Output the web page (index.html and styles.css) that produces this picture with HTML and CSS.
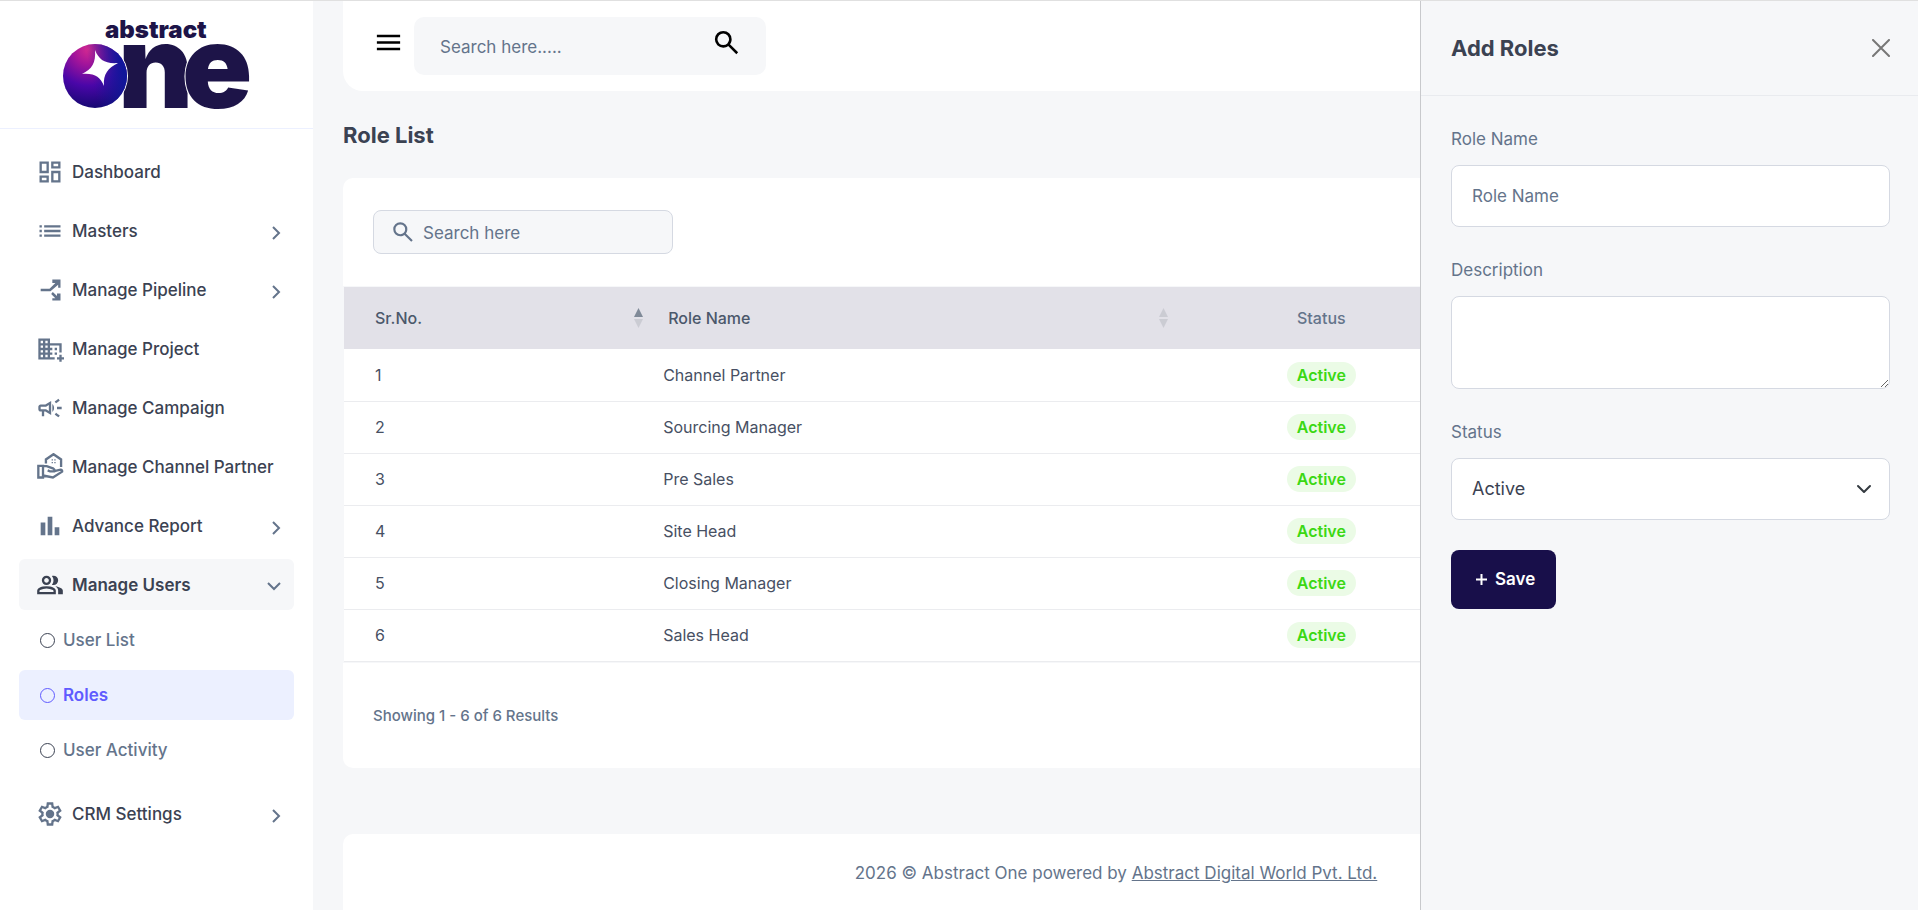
FILE: index.html
```html
<!DOCTYPE html>
<html lang="en">
<head>
    <meta charset="UTF-8">
    <meta name="viewport" content="width=device-width, initial-scale=1.0">
    <title>Role List</title>
    <link rel="stylesheet" href="styles.css">
</head>
<body>

    <aside class="sidebar">
        <a href="#" class="logo" aria-label="abstract one">
            <svg width="190" height="115" viewBox="0 0 190 115">
                <defs>
                    <radialGradient id="ball" cx="0.4" cy="0.08" r="0.95">
                        <stop offset="0" stop-color="#d62a90"/>
                        <stop offset="0.25" stop-color="#a3149a"/>
                        <stop offset="0.6" stop-color="#4a06a8"/>
                        <stop offset="1" stop-color="#12086e"/>
                    </radialGradient>
                    <linearGradient id="shade" x1="0.3" y1="0.5" x2="1" y2="0.35">
                        <stop offset="0.2" stop-color="#1a1a9c" stop-opacity="0"/>
                        <stop offset="0.9" stop-color="#10169a"/>
                    </linearGradient>
                </defs>
                <text class="logo-small" x="43" y="26">abstract</text>
                <text class="logo-big" x="56" y="96">n</text>
                <text class="logo-big" x="120" y="96">e</text>
                <circle cx="33" cy="64" r="33" fill="#fff"/>
                <circle cx="33" cy="64" r="32" fill="url(#ball)"/>
                <circle cx="33" cy="64" r="32" fill="url(#shade)"/>
                <path d="M33 38c4 10 10 14 23 13-10 5-15 11-14 23-4-9-9-13-22-12 10-5 14-11 13-24z" fill="#fff"/>
            </svg>
        </a>

        <nav class="menu">
            <a href="#" class="menu-item">
                <svg class="icon" viewBox="0 0 24 24"><path d="M19 5v2h-4V5h4M9 5v6H5V5h4m10 8v6h-4v-6h4M9 17v2H5v-2h4M21 3h-8v6h8V3zM11 3H3v10h8V3zm10 8h-8v10h8V11zm-10 4H3v6h8v-6z"/></svg>
                <span>Dashboard</span>
            </a>
            <a href="#" class="menu-item">
                <svg class="icon" viewBox="0 0 24 24"><path d="M3 13h2v-2H3v2zm0 4h2v-2H3v2zm0-8h2V7H3v2zm4 4h14v-2H7v2zm0 4h14v-2H7v2zM7 7v2h14V7H7z"/></svg>
                <span>Masters</span>
                <svg class="arrow" viewBox="0 0 14 14"><path d="M6 1l6 6-6 6"/></svg>
            </a>
            <a href="#" class="menu-item">
                <svg class="icon" viewBox="0 0 24 24"><path d="M4 11h7.600l5-5H14V3h7v7h-2V7.400L12.400 13H4zM14.400 13.800l3.600 3.400V15h3v6h-7v-2h2.600l-3.600-3.600z"/></svg>
                <span>Manage Pipeline</span>
                <svg class="arrow" viewBox="0 0 14 14"><path d="M6 1l6 6-6 6"/></svg>
            </a>
            <a href="#" class="menu-item">
                <svg class="icon" viewBox="0 0 24 24"><path d="M12 7V3H2v18h14v-2h-4v-2h2v-2h-2v-2h2v-2h-2V9h8v6h2V7H12zM6 19H4v-2h2v2zm0-4H4v-2h2v2zm0-4H4V9h2v2zm0-4H4V5h2v2zm4 12H8v-2h2v2zm0-4H8v-2h2v2zm0-4H8V9h2v2zm0-4H8V5h2v2zm14 12v2h-2v2h-2v-2h-2v-2h2v-2h2v2h2zm-6-8h-2v2h2v-2zm0 4h-2v2h2v-2z"/></svg>
                <span>Manage Project</span>
            </a>
            <a href="#" class="menu-item">
                <svg class="icon" viewBox="0 0 24 24"><path d="M18 11v2h4v-2h-4zm-2 6.610c.96.71 2.210 1.650 3.200 2.390.4-.53.8-1.070 1.200-1.600-.99-.74-2.240-1.680-3.200-2.400-.4.54-.8 1.080-1.200 1.610zM20.400 5.600c-.4-.53-.8-1.070-1.200-1.600-.99.74-2.240 1.680-3.200 2.400.4.53.8 1.070 1.200 1.600.96-.72 2.210-1.650 3.200-2.400zM4 9c-1.100 0-2 .9-2 2v2c0 1.100.9 2 2 2h1v4h2v-4h1l5 3V6L8 9H4zm5.030 1.710L11 9.530v4.940l-1.970-1.180-.48-.29H4v-2h4.550l.48-.29zM15.500 12c0-1.330-.58-2.530-1.500-3.350v6.690c.92-.81 1.500-2.010 1.500-3.340z"/></svg>
                <span>Manage Campaign</span>
            </a>
            <a href="#" class="menu-item">
                <svg class="icon icon-line" viewBox="0 0 24 24"><path d="M2 11h4v10H2zM6 11.200h3.200l5.800 2.200q1.300.8.800 2.300H12l-2-.8M15.700 15.500l5.300-1.300q1.600.2 1.400 1.800L14.500 21 6 19.300M8.500 9V5.500L15 1l6.500 4.500V12"/><path class="dots" d="M13.400 5.400h1.100v1.100h-1.100zM15.700 5.400h1.100v1.100h-1.100zM13.400 7.700h1.100v1.100h-1.100zM15.700 7.700h1.100v1.100h-1.100z"/></svg>
                <span>Manage Channel Partner</span>
            </a>
            <a href="#" class="menu-item">
                <svg class="icon" viewBox="0 0 24 24"><path d="M4 9h4v11H4zm12 4h4v7h-4zm-6-9h4v16h-4z"/></svg>
                <span>Advance Report</span>
                <svg class="arrow" viewBox="0 0 14 14"><path d="M6 1l6 6-6 6"/></svg>
            </a>
            <a href="#" class="menu-item open">
                <svg class="icon" viewBox="0 -960 960 960"><path d="M40-160v-112q0-34 17.500-62.500T104-378q62-31 126-46.500T360-440q66 0 130 15.500T616-378q29 15 46.500 43.500T680-272v112H40Zm720 0v-120q0-44-24.500-84.500T666-434q51 6 96 20.500t84 35.500q36 20 55 44.500t19 53.500v120H760ZM360-480q-66 0-113-47t-47-113q0-66 47-113t113-47q66 0 113 47t47 113q0 66-47 113t-113 47Zm400-160q0 66-47 113t-113 47q-11 0-28-2.500t-28-5.500q27-32 41.500-71t14.500-81q0-42-14.500-81T544-792q14-5 28-6.500t28-1.500q66 0 113 47t47 113ZM120-240h480v-32q0-11-5.500-20T580-306q-54-27-109-40.500T360-360q-56 0-111 13.500T140-306q-9 5-14.500 14t-5.500 20v32Zm240-320q33 0 56.500-23.500T440-640q0-33-23.500-56.500T360-720q-33 0-56.500 23.500T280-640q0 33 23.500 56.500T360-560Z"/></svg>
                <span>Manage Users</span>
                <svg class="arrow" viewBox="0 0 14 14"><path d="M1 3l6 6 6-6"/></svg>
            </a>
            <div class="submenu">
                <a href="#" class="sub-item">User List</a>
                <a href="#" class="sub-item active">Roles</a>
                <a href="#" class="sub-item">User Activity</a>
            </div>
            <a href="#" class="menu-item">
                <svg class="icon" viewBox="0 -960 960 960"><path d="m370-80-16-128q-13-5-24.500-12T307-235l-119 50L78-375l103-78q-1-7-1-13.500v-27q0-6.500 1-13.500L78-585l110-190 119 50q11-8 23-15t24-12l16-128h220l16 128q13 5 24.500 12t22.500 15l119-50 110 190-103 78q1 7 1 13.500v27q0 6.500-2 13.500l103 78-110 190-118-50q-11 8-23 15t-24 12L590-80H370Zm70-80h79l14-106q31-8 57.500-23.500T639-327l99 41 39-68-86-65q5-14 7-29.500t2-31.500q0-16-2-31.500t-7-29.500l86-65-39-68-99 42q-22-23-48.500-38.500T533-694l-13-106h-79l-14 106q-31 8-57.500 23.500T321-633l-99-41-39 68 86 64q-5 15-7 30t-2 32q0 16 2 31t7 30l-86 65 39 68 99-42q22 23 48.500 38.500T427-266l13 106Z"/><circle cx="480" cy="-480" r="145"/></svg>
                <span>CRM Settings</span>
                <svg class="arrow" viewBox="0 0 14 14"><path d="M6 1l6 6-6 6"/></svg>
            </a>
        </nav>
    </aside>

    <main class="main">
        <header class="topbar">
            <button type="button" class="icon-btn" aria-label="Toggle menu">
                <svg width="31" height="31" viewBox="0 0 24 24"><path d="M3 18h18v-2H3v2zm0-5h18v-2H3v2zm0-7v2h18V6H3z"/></svg>
            </button>
            <form class="top-search">
                <input type="text" placeholder="Search here....." aria-label="Search">
                <button type="button" class="icon-btn" aria-label="Search">
                    <svg width="31" height="31" viewBox="0 -960 960 960"><path d="M784-120 532-372q-30 24-69 38t-83 14q-109 0-184.500-75.500T120-580q0-109 75.500-184.500T380-840q109 0 184.500 75.500T640-580q0 44-14 83t-38 69l252 252-56 56ZM380-400q75 0 127.500-52.500T560-580q0-75-52.500-127.500T380-760q-75 0-127.500 52.500T200-580q0 75 52.500 127.500T380-400Z"/></svg>
                </button>
            </form>
        </header>

        <h1 class="page-title">Role List</h1>

        <section class="card">
            <div class="card-head">
                <label class="table-search">
                    <svg width="26" height="26" viewBox="0 -960 960 960"><path d="M784-120 532-372q-30 24-69 38t-83 14q-109 0-184.500-75.500T120-580q0-109 75.500-184.500T380-840q109 0 184.500 75.500T640-580q0 44-14 83t-38 69l252 252-56 56ZM380-400q75 0 127.500-52.500T560-580q0-75-52.500-127.500T380-760q-75 0-127.500 52.500T200-580q0 75 52.500 127.500T380-400Z"/></svg>
                    <input type="text" placeholder="Search here" aria-label="Search roles">
                </label>
            </div>
            <div class="table-wrap">
                <table class="role-table">
                    <thead>
                        <tr>
                            <th class="col-no"><div class="sort asc">Sr.No. <svg width="9" height="20" viewBox="0 0 9 20"><path class="up" d="M4.500 0L9 9H0z"/><path class="down" d="M0 11h9l-4.500 9z"/></svg></div></th>
                            <th class="col-name"><div class="sort">Role Name <svg width="9" height="20" viewBox="0 0 9 20"><path class="up" d="M4.500 0L9 9H0z"/><path class="down" d="M0 11h9l-4.500 9z"/></svg></div></th>
                            <th class="col-status">Status</th>
                            <th></th>
                        </tr>
                    </thead>
                    <tbody>
                        <tr><td>1</td><td>Channel Partner</td><td><span class="badge">Active</span></td><td></td></tr>
                        <tr><td>2</td><td>Sourcing Manager</td><td><span class="badge">Active</span></td><td></td></tr>
                        <tr><td>3</td><td>Pre Sales</td><td><span class="badge">Active</span></td><td></td></tr>
                        <tr><td>4</td><td>Site Head</td><td><span class="badge">Active</span></td><td></td></tr>
                        <tr><td>5</td><td>Closing Manager</td><td><span class="badge">Active</span></td><td></td></tr>
                        <tr><td>6</td><td>Sales Head</td><td><span class="badge">Active</span></td><td></td></tr>
                    </tbody>
                </table>
            </div>
            <p class="results">Showing 1 - 6 of 6 Results</p>
        </section>

        <footer class="footer">
            <p>2026 © Abstract One powered by <a href="#">Abstract Digital World Pvt. Ltd.</a></p>
        </footer>
    </main>

    <!-- Add role side panel -->
    <aside class="panel">
        <div class="panel-head">
            <h2>Add Roles</h2>
            <button type="button" class="icon-btn" aria-label="Close">
                <svg class="close" width="18" height="18" viewBox="0 0 18 18"><path d="M1 1l16 16M17 1L1 17"/></svg>
            </button>
        </div>
        <form class="panel-body">
            <div class="field">
                <label for="role-name">Role Name</label>
                <input type="text" id="role-name" placeholder="Role Name">
            </div>
            <div class="field">
                <label for="description">Description</label>
                <textarea id="description"></textarea>
            </div>
            <div class="field">
                <label for="status">Status</label>
                <div class="select-wrap">
                    <select id="status">
                        <option>Active</option>
                        <option>Inactive</option>
                    </select>
                    <svg width="16" height="16" viewBox="0 0 16 16"><path d="M2 5l6 6 6-6"/></svg>
                </div>
            </div>
            <button type="button" class="save">
                <svg width="13" height="13" viewBox="0 0 13 13"><path d="M6.500 1v11M1 6.500h11"/></svg>
                Save
            </button>
        </form>
    </aside>

</body>
</html>
```
FILE: styles.css
```css
* {
    box-sizing: border-box;
}

body {
    margin: 0;
    height: 100vh;
    display: flex;
    overflow: hidden;
    border-top: 1px solid #e0e0e0;
    background-color: #f6f7f9;
    color: #3b4252;
    font-family: Inter, "Liberation Sans", sans-serif;
    font-size: 17px;
    line-height: 26px;
}

h1, h2, p {
    margin: 0;
}

a {
    color: inherit;
    text-decoration: none;
}

input, textarea, select, button {
    font: inherit;
    color: inherit;
}

input::placeholder {
    color: #64748b;
    opacity: 1;
}

.icon-btn {
    display: flex;
    padding: 0;
    border: none;
    background: none;
    cursor: pointer;
}

.icon-btn svg {
    fill: #000;
}

/* sidebar */
.sidebar {
    width: 313px;
    flex-shrink: 0;
    background-color: #fff;
}

.logo {
    display: flex;
    justify-content: center;
    height: 128px;
    padding-top: 11px;
    border-bottom: 1px solid #ecf0ff;
}

.logo-small, .logo-big {
    font-family: Inter, sans-serif;
    font-weight: 900;
    fill: #1d1448;
}

.logo-small {
    font-size: 24px;
}

.logo-big {
    font-size: 116px;
    stroke: #fff;
    stroke-width: 2px;
    paint-order: stroke;
}

.menu {
    display: flex;
    flex-direction: column;
    gap: 8px;
    padding: 17px 19px;
}

.menu-item {
    display: flex;
    align-items: center;
    gap: 8px;
    height: 51px;
    padding: 0 13px 0 17px;
    border-radius: 6px;
    font-weight: 500;
    white-space: nowrap;
}

.icon {
    width: 28px;
    height: 28px;
    flex-shrink: 0;
    fill: #64748b;
}

.icon-line {
    fill: none;
    stroke: #64748b;
    stroke-width: 2;
}

.dots {
    fill: #64748b;
    stroke: none;
}

.arrow {
    width: 14px;
    height: 14px;
    margin: 4px 0 0 auto;
    fill: none;
    stroke: #64748b;
    stroke-width: 2;
}

.menu-item.open {
    background-color: #f6f7f9;
    font-weight: 600;
}

.menu-item.open .icon {
    fill: #3b4252;
}

.submenu {
    display: flex;
    flex-direction: column;
    gap: 5px;
    margin: -3px 0 5px;
}

.sub-item {
    display: flex;
    align-items: center;
    gap: 8px;
    height: 50px;
    padding-left: 21px;
    border-radius: 6px;
    color: #64748b;
    font-weight: 500;
}

.sub-item::before {
    content: "";
    width: 13px;
    height: 13px;
    border: 1px solid #3b4252;
    border-radius: 50%;
}

.sub-item.active {
    background-color: #ecf0ff;
    color: #605bff;
    font-weight: 600;
}

.sub-item.active::before {
    border-color: #605bff;
}

/* main */
.main {
    flex: 1;
    display: flex;
    flex-direction: column;
    padding: 0 29px 0 30px;
}

.topbar {
    display: flex;
    gap: 10px;
    padding: 16px 30px;
    border-radius: 0 0 20px 20px;
    background-color: #fff;
}

.topbar .icon-btn {
    align-items: center;
    height: 50px;
}

.top-search {
    display: flex;
    width: 352px;
    height: 58px;
    padding: 0 24px 0 26px;
    border-radius: 10px;
    background-color: #f6f7f9;
}

.top-search input, .table-search input {
    flex: 1;
    min-width: 0;
    padding: 1px 0 0;
    border: none;
    outline: none;
    background: none;
}

.page-title {
    margin: 30px 0 28px;
    font-size: 22px;
    line-height: 29px;
    font-weight: 700;
}

.card {
    border-radius: 10px;
    background-color: #fff;
}

.card-head {
    padding: 32px 30px;
}

.table-search {
    display: flex;
    align-items: center;
    gap: 7px;
    width: 300px;
    height: 44px;
    padding: 0 16px;
    border: 1px solid #d5d9e2;
    border-radius: 8px;
    background-color: #f6f7f9;
}

.table-search svg {
    fill: #64748b;
}

.table-wrap {
    border: 1px solid #f6f7f9;
}

.role-table {
    width: 100%;
    table-layout: fixed;
    border-collapse: collapse;
    font-size: 16px;
    line-height: 20px;
    color: #475063;
}

.role-table th {
    height: 62px;
    padding: 0 5px 0 20px;
    background-color: #e2e1e8;
    color: #4b586b;
    font-weight: 500;
    text-align: left;
}

.role-table td {
    height: 52px;
    padding: 0 15px;
    border-bottom: 1px solid #ebecef;
}

.role-table th:first-child, .role-table td:first-child {
    padding-left: 31px;
}

.role-table .col-no {
    width: 19.7%;
}

.role-table .col-name {
    width: 34%;
}

.role-table .col-status {
    width: 19.2%;
    padding: 0;
    color: #64748b;
    text-align: center;
}

.role-table td:nth-child(3) {
    text-align: center;
}

.sort {
    display: flex;
    align-items: center;
    justify-content: space-between;
}

.sort svg {
    fill: #cbccd3;
}

.sort.asc .up {
    fill: #808a98;
}

.badge {
    display: inline-block;
    padding: 3px 10px;
    border-radius: 13px;
    background-color: #ebfbe6;
    color: #3bd813;
    font-weight: 600;
}

.results {
    padding: 40px 30px 39px;
    color: #64748b;
    font-size: 15px;
    font-weight: 500;
}

.footer {
    flex: 1;
    margin-top: 66px;
    padding-top: 26px;
    border-radius: 10px 10px 0 0;
    background-color: #fff;
    color: #64748b;
    text-align: center;
}

.footer a {
    text-decoration: underline;
}

/* side panel */
.panel {
    position: fixed;
    top: 1px;
    right: 0;
    bottom: 0;
    width: 498px;
    border-left: 1px solid #c8c9cc;
    background-color: #f6f7f9;
}

.panel-head {
    display: flex;
    align-items: center;
    justify-content: space-between;
    height: 95px;
    padding: 0 28px 0 30px;
    border-bottom: 1px solid #e9ebef;
}

.panel-head h2 {
    font-size: 22px;
    font-weight: 700;
}

.close {
    stroke: #777;
    stroke-width: 2;
    stroke-linecap: round;
}

.panel-body {
    display: flex;
    flex-direction: column;
    align-items: flex-start;
    gap: 30px;
    padding: 30px 28px 30px 30px;
}

.field {
    display: flex;
    flex-direction: column;
    gap: 13px;
    width: 100%;
    color: #64748b;
}

.field input, .field textarea, .field select {
    display: block;
    width: 100%;
    height: 62px;
    padding: 0 20px;
    border: 1px solid #d5d9e2;
    border-radius: 8px;
    background-color: #fff;
    color: #3b4252;
}

.field textarea {
    height: 93px;
    padding: 16px 20px;
}

.select-wrap {
    position: relative;
}

.field select {
    appearance: none;
    font-size: 18px;
}

.select-wrap svg {
    position: absolute;
    right: 18px;
    top: 23px;
    fill: none;
    stroke: #343a40;
    stroke-width: 2;
    stroke-linecap: round;
    stroke-linejoin: round;
    pointer-events: none;
}

.save {
    display: flex;
    align-items: center;
    gap: 7px;
    height: 59px;
    padding: 0 21px 0 24px;
    border: none;
    border-radius: 8px;
    background-color: #180f4a;
    color: #fff;
    font-weight: 600;
    line-height: 25px;
    cursor: pointer;
}

.save svg {
    stroke: #fff;
    stroke-width: 2;
}
```
